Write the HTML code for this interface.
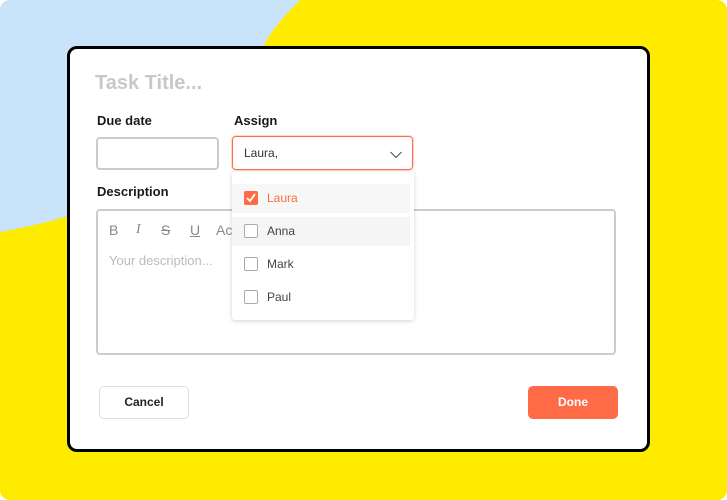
<!DOCTYPE html>
<html><head><meta charset="utf-8"><style>
*{box-sizing:border-box;margin:0;padding:0}
body{width:727px;height:500px;overflow:hidden;background:#fff;font-family:"Liberation Sans",sans-serif;position:relative}
.bg{position:absolute;left:0;top:0;width:727px;height:500px;border-radius:10px;overflow:hidden;background:#ffeb00}
.modal{position:absolute;left:67px;top:46px;width:583px;height:406px;border:3px solid #000;border-radius:10px;background:#fff}
.abs{position:absolute}
.lbl{font-size:13px;font-weight:bold;color:#1a1a1a}
.inp{border:2px solid #ccc;border-radius:4px}
.dd{position:absolute;left:232px;top:172px;width:182px;height:148px;background:#fff;border-radius:3px;box-shadow:0 1px 5px rgba(0,0,0,.18)}
.item{position:absolute;left:0;width:178px;height:29px;font-size:12px;color:#444}
.cb{position:absolute;left:12px;top:7px;width:14px;height:14px;border:1.5px solid #aaa;border-radius:2px;background:#fff}
.item span{position:absolute;left:35px;top:7px}
.btn{position:absolute;top:386px;width:90px;height:33px;border-radius:5px;font-size:12px;font-weight:bold;text-align:center;line-height:33px}
.tb{position:absolute;top:222px;font-size:14px;color:#888}
</style></head><body>
<div class="bg">
<svg width="727" height="500" style="position:absolute;left:0;top:0"><path d="M0 0 L300 0 C280 20 268 35 262 50 C250 120 180 200 0 232 Z" fill="#c9e4fa"/></svg>
</div>
<div class="modal"></div>
<div class="abs" style="left:95px;top:72px;font-size:20px;font-weight:bold;color:#c8c8c8">Task Title...</div>
<div class="abs lbl" style="left:97px;top:113px">Due date</div>
<div class="abs lbl" style="left:234px;top:113px">Assign</div>
<div class="abs inp" style="left:96px;top:137px;width:123px;height:33px"></div>
<div class="abs" style="left:232px;top:136px;width:181px;height:34px;border:1.5px solid #ff6b4a;border-radius:4px;box-shadow:0 0 0 1px #ffd6cc"></div>
<div class="abs" style="left:244px;top:146px;font-size:12px;color:#333">Laura,</div>
<svg class="abs" style="left:389px;top:150px" width="14" height="10"><path d="M1.5 2 L7 7.5 L12.5 2" fill="none" stroke="#555" stroke-width="1.1"/></svg>
<div class="abs lbl" style="left:97px;top:184px">Description</div>
<div class="abs inp" style="left:96px;top:209px;width:520px;height:146px"></div>
<div class="tb" style="left:109px">B</div>
<div class="tb" style="left:136px;font-style:italic;font-family:'Liberation Serif'">I</div>
<div class="tb" style="left:161px;text-decoration:line-through">S</div>
<div class="tb" style="left:190px;text-decoration:underline">U</div>
<div class="tb" style="left:216px">Ac</div>
<div class="abs" style="left:109px;top:253px;font-size:13px;color:#bbb">Your description...</div>
<div class="dd">
<div class="item" style="top:12px;background:#f7f7f7;width:178px"><div class="cb" style="background:#ff6b45;border-color:#ff6b45"><svg width="12" height="12" style="position:absolute;left:0;top:0"><path d="M2 6 L5 9 L10 2" fill="none" stroke="#fff" stroke-width="1.8"/></svg></div><span style="color:#ff6b45">Laura</span></div>
<div class="item" style="top:45px;background:#f5f5f5"><div class="cb"></div><span>Anna</span></div>
<div class="item" style="top:78px"><div class="cb"></div><span>Mark</span></div>
<div class="item" style="top:111px"><div class="cb"></div><span>Paul</span></div>
</div>
<div class="btn" style="left:99px;border:1px solid #ddd;color:#222;line-height:31px">Cancel</div>
<div class="btn" style="left:528px;background:#ff6b47;color:#fff">Done</div>
</body></html>
